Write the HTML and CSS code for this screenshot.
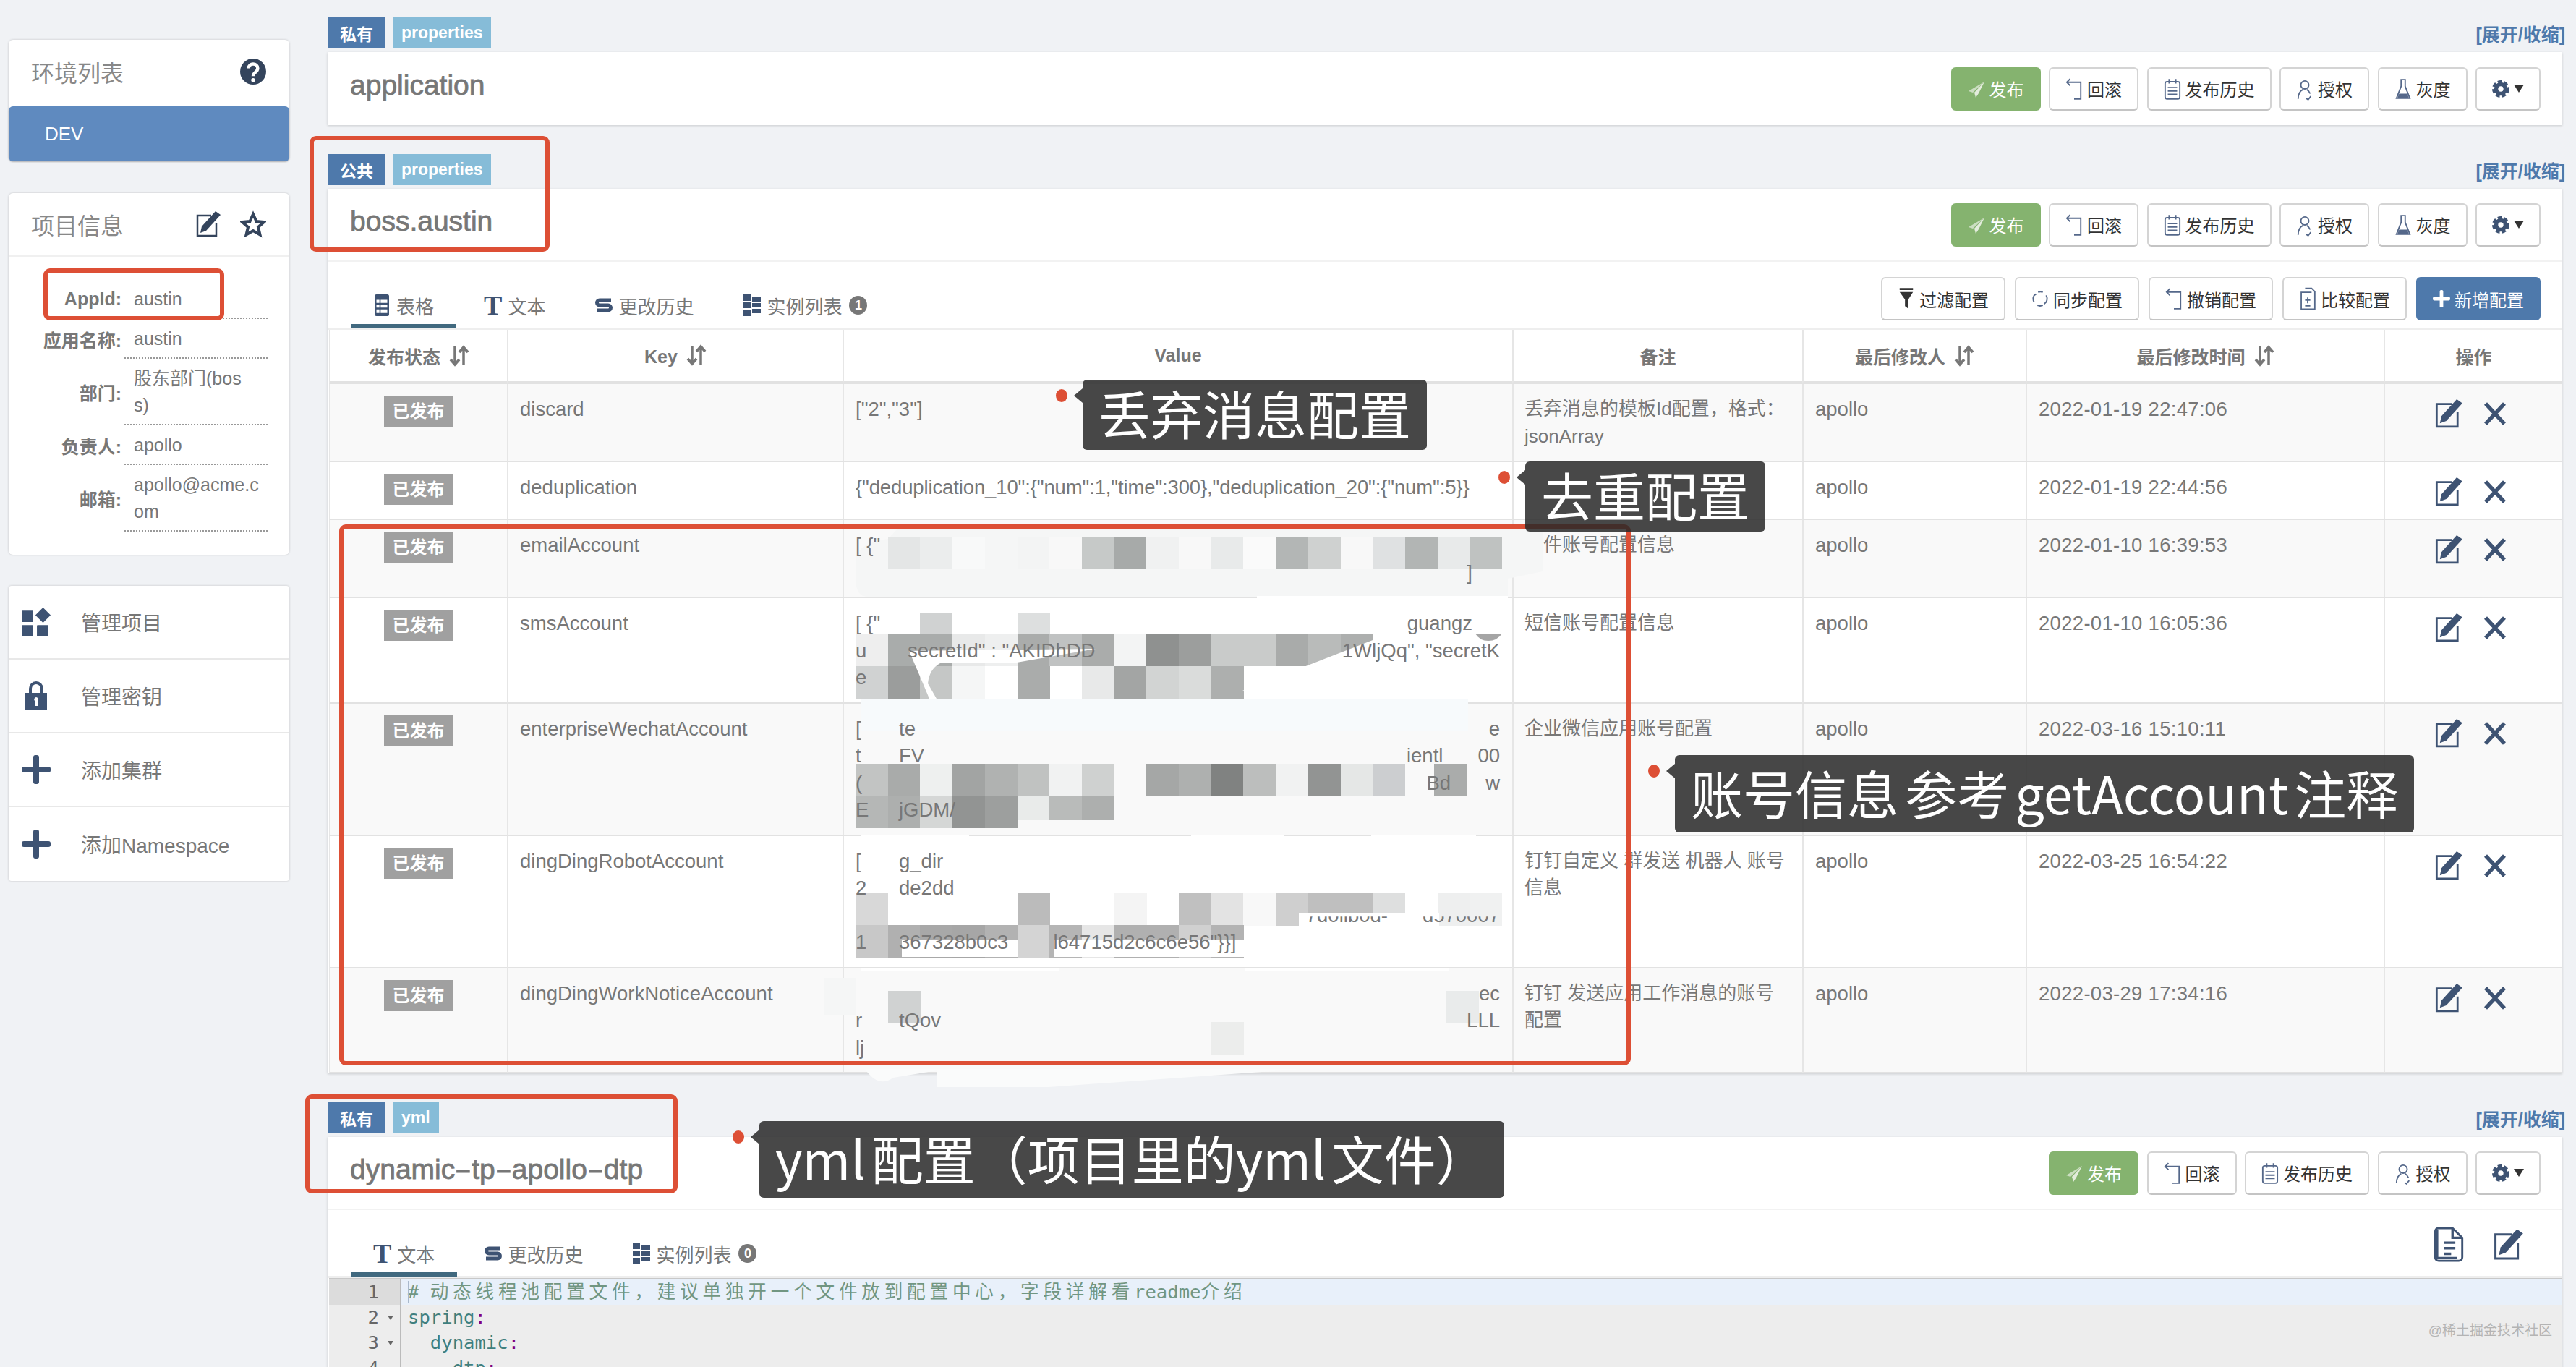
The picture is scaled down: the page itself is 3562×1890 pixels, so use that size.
FILE: index.html
```html
<!DOCTYPE html>
<html lang="zh-CN">
<head>
    <meta charset="UTF-8">
    <title>Apollo 配置中心</title>
    <link rel="stylesheet" href="styles.css">
</head>
<body>
<svg class="icon-defs" width="0" height="0">
    <symbol id="i-help" viewBox="0 0 40 40"><circle cx="20" cy="20" r="20" fill="currentColor"/><path d="M13 15c0-9 14-9 14 0 0 6-7 6-7 12" fill="none" stroke="#fff" stroke-width="5"/><circle cx="20" cy="33" r="3" fill="#fff"/></symbol>
    <symbol id="i-edit" viewBox="0 0 36 36"><path d="M22 6H3v28h26V16" fill="none" stroke="currentColor" stroke-width="2.500"/><path d="M28 0l7 5-20 22-8 3 2-9z" fill="currentColor"/></symbol>
    <symbol id="i-star" viewBox="0 0 36 34"><path d="M18 3l4.500 10 10.500 1-8 7 2.500 10.500-9.500-5.500-9.500 5.500 2.500-10.500-8-7 10.500-1z" fill="none" stroke="currentColor" stroke-width="4"/></symbol>
    <symbol id="i-apps" viewBox="0 0 38 38"><rect y="4" width="15" height="15" rx="1" fill="currentColor"/><rect y="23" width="15" height="15" rx="1" fill="currentColor"/><rect x="20" y="23" width="15" height="15" rx="1" fill="currentColor"/><path d="M28 0l10 10-10 10-10-10z" fill="currentColor"/></symbol>
    <symbol id="i-lock" viewBox="0 0 30 40"><path d="M7 18V10a8 8 0 0 1 16 0v8" fill="none" stroke="currentColor" stroke-width="4"/><path fill-rule="evenodd" d="M0 16h30v24H0zM15 22a3 3 0 0 0-2 5v7h4v-7a3 3 0 0 0-2-5z" fill="currentColor"/></symbol>
    <symbol id="i-plus" viewBox="0 0 40 40"><rect x="16" width="8" height="40" rx="3" fill="currentColor"/><rect y="16" width="40" height="8" rx="3" fill="currentColor"/></symbol>
    <symbol id="i-send" viewBox="0 0 24 24"><path d="M23 2L1 15l6 2z" fill="currentColor" opacity=".75"/><path d="M23 2L9 17l2 7 4-6z" fill="currentColor"/></symbol>
    <symbol id="i-back" viewBox="0 0 26 34"><path d="M7 2L2 7l5 5M2 7h21v25H13" fill="none" stroke="currentColor" stroke-width="2"/></symbol>
    <symbol id="i-note" viewBox="0 0 26 34"><rect x="2" y="6" width="22" height="26" rx="3" fill="none" stroke="currentColor" stroke-width="2"/><path d="M8 2v7M18 2v7M6 15h14M6 20h14M6 25h14" stroke="currentColor" stroke-width="2"/></symbol>
    <symbol id="i-user" viewBox="0 0 26 34"><circle cx="13" cy="11" r="6" fill="none" stroke="currentColor" stroke-width="2"/><path d="M3 32c0-8 3-12 7-14M16 18c2 1 4 3 5 6M15 31l3 2 4-5" fill="none" stroke="currentColor" stroke-width="2"/></symbol>
    <symbol id="i-flask" viewBox="0 0 26 34"><path d="M9 3h8M10 3v10L3 31h20l-7-18V3" fill="none" stroke="currentColor" stroke-width="2"/><path d="M7 24h12l3 7H4z" fill="currentColor"/></symbol>
    <symbol id="i-gear" viewBox="0 0 26 34"><circle cx="13" cy="17" r="7" fill="none" stroke="currentColor" stroke-width="6"/><circle cx="13" cy="17" r="11" fill="none" stroke="currentColor" stroke-width="4" stroke-dasharray="6 3.400"/></symbol>
    <symbol id="i-filter" viewBox="0 0 26 34"><path d="M3 1h20v3H3zM3 7h20l-7 11v14l-5-4V18z" fill="currentColor"/></symbol>
    <symbol id="i-sync" viewBox="0 0 26 34"><path d="M4 22a10 10 0 0 1 0-10l3-2M22 12a10 10 0 0 1 0 10l-3 3M10 7a11 11 0 0 1 7 0M17 27a11 11 0 0 1-8 0" fill="none" stroke="currentColor" stroke-width="2"/></symbol>
    <symbol id="i-diff" viewBox="0 0 26 38"><path d="M9 3h10l5 5v27H3V9h16" fill="none" stroke="currentColor" stroke-width="2"/><path d="M13 17v9M9 21h8M9 30h8" stroke="currentColor" stroke-width="2"/></symbol>
    <symbol id="i-table" viewBox="0 0 24 36"><path fill-rule="evenodd" d="M3 0h18a3 3 0 0 1 3 3v30a3 3 0 0 1-3 3H3a3 3 0 0 1-3-3V3a3 3 0 0 1 3-3zM3 9v5h5V9zM10 9v5h11V9zM3 17v5h5v-5zM10 17v5h11v-5zM3 25v6h5v-6zM10 25v6h11v-6z" fill="currentColor"/></symbol>
    <symbol id="i-hist" viewBox="0 0 24 30"><path d="M22 8H6a3 3 0 0 0 0 7h12a3 3 0 0 1 0 7H2" fill="none" stroke="currentColor" stroke-width="5"/></symbol>
    <symbol id="i-inst" viewBox="0 0 24 30"><path d="M0 0h10v9H0zM0 11h10v8H0zM0 21h10v9H0zM12 4h12v6H12zM12 12h12v6H12zM12 20h12v6H12z" fill="currentColor"/></symbol>
    <symbol id="i-sort" viewBox="0 0 28 30"><path d="M8 2v25M2 20l6 7 6-7M20 28V3M14 10l6-7 6 7" fill="none" stroke="currentColor" stroke-width="3.500"/></symbol>
    <symbol id="i-del" viewBox="0 0 34 34"><path d="M4 3l26 28M30 3L4 31" fill="none" stroke="currentColor" stroke-width="5.500"/></symbol>
    <symbol id="i-doc" viewBox="0 0 44 50"><path d="M6 4v40h28" fill="none" stroke="currentColor" stroke-width="3"/><path d="M3 6a5 5 0 0 1 5-5h20l14 14v28a5 5 0 0 1-5 5H8a5 5 0 0 1-5-5z" fill="none" stroke="currentColor" stroke-width="3"/><path d="M28 1v14h14M16 22h16M16 30h16M16 38h10" fill="none" stroke="currentColor" stroke-width="3.500"/></symbol>
</svg>

<div class="page">
    <aside class="sidebar">
        <section class="side-panel">
            <div class="side-head">
                <span>环境列表</span>
                <svg class="side-icon"><use href="#i-help"/></svg>
            </div>
            <div class="env-item">DEV</div>
        </section>

        <section class="side-panel side-gap">
            <div class="side-head side-head-line">
                <span>项目信息</span>
                <div class="side-tools">
                    <svg class="side-icon"><use href="#i-edit"/></svg>
                    <svg class="side-icon"><use href="#i-star"/></svg>
                </div>
            </div>
            <div class="info-list">
                <div class="info-row"><b>AppId:</b><span>austin</span></div>
                <div class="info-row"><b>应用名称:</b><span>austin</span></div>
                <div class="info-row"><b>部门:</b><span>股东部门(bos<br>s)</span></div>
                <div class="info-row"><b>负责人:</b><span>apollo</span></div>
                <div class="info-row"><b>邮箱:</b><span>apollo@acme.c<br>om</span></div>
            </div>
        </section>

        <section class="side-panel side-gap side-menu">
            <div class="menu-item"><svg class="menu-icon"><use href="#i-apps"/></svg>管理项目</div>
            <div class="menu-item"><svg class="menu-icon"><use href="#i-lock"/></svg>管理密钥</div>
            <div class="menu-item"><svg class="menu-icon"><use href="#i-plus"/></svg>添加集群</div>
            <div class="menu-item"><svg class="menu-icon"><use href="#i-plus"/></svg>添加Namespace</div>
        </section>
    </aside>

    <main class="content">
        <section class="ns">
            <div class="ns-bar">
                <div class="tags"><span class="tag tag-scope">私有</span><span class="tag tag-type">properties</span></div>
                <a class="ns-toggle">[展开/收缩]</a>
            </div>
            <div class="ns-panel">
                <div class="ns-head">
                    <h2>application</h2>
                    <div class="btns">
                        <button class="btn btn-green"><svg><use href="#i-send"/></svg>发布</button>
                        <button class="btn"><svg><use href="#i-back"/></svg>回滚</button>
                        <button class="btn"><svg><use href="#i-note"/></svg>发布历史</button>
                        <button class="btn"><svg><use href="#i-user"/></svg>授权</button>
                        <button class="btn"><svg><use href="#i-flask"/></svg>灰度</button>
                        <button class="btn btn-gear"><svg><use href="#i-gear"/></svg><i class="caret"></i></button>
                    </div>
                </div>
            </div>
        </section>

        <section class="ns">
            <div class="ns-bar">
                <div class="tags"><span class="tag tag-scope">公共</span><span class="tag tag-type">properties</span></div>
                <a class="ns-toggle">[展开/收缩]</a>
            </div>
            <div class="ns-panel">
                <div class="ns-head ns-head-line">
                    <h2>boss.austin</h2>
                    <div class="btns">
                        <button class="btn btn-green"><svg><use href="#i-send"/></svg>发布</button>
                        <button class="btn"><svg><use href="#i-back"/></svg>回滚</button>
                        <button class="btn"><svg><use href="#i-note"/></svg>发布历史</button>
                        <button class="btn"><svg><use href="#i-user"/></svg>授权</button>
                        <button class="btn"><svg><use href="#i-flask"/></svg>灰度</button>
                        <button class="btn btn-gear"><svg><use href="#i-gear"/></svg><i class="caret"></i></button>
                    </div>
                </div>
                <div class="tab-row">
                    <div class="tabs">
                        <div class="tab tab-on"><svg><use href="#i-table"/></svg>表格</div>
                        <div class="tab"><span class="tab-t">T</span>文本</div>
                        <div class="tab"><svg><use href="#i-hist"/></svg>更改历史</div>
                        <div class="tab"><svg><use href="#i-inst"/></svg>实例列表<span class="count">1</span></div>
                    </div>
                    <div class="btns btns-wide">
                        <button class="btn btn-dark"><svg><use href="#i-filter"/></svg>过滤配置</button>
                        <button class="btn"><svg><use href="#i-sync"/></svg>同步配置</button>
                        <button class="btn"><svg><use href="#i-back"/></svg>撤销配置</button>
                        <button class="btn"><svg><use href="#i-diff"/></svg>比较配置</button>
                        <button class="btn btn-blue"><svg><use href="#i-plus"/></svg>新增配置</button>
                    </div>
                </div>
                <table class="items">
                    <colgroup>
                        <col class="c-status"><col class="c-key"><col class="c-value"><col class="c-note"><col class="c-user"><col class="c-time"><col class="c-ops">
                    </colgroup>
                    <thead>
                        <tr>
                            <th>发布状态<svg class="sort"><use href="#i-sort"/></svg></th>
                            <th>Key<svg class="sort"><use href="#i-sort"/></svg></th>
                            <th>Value</th>
                            <th>备注</th>
                            <th>最后修改人<svg class="sort"><use href="#i-sort"/></svg></th>
                            <th>最后修改时间<svg class="sort"><use href="#i-sort"/></svg></th>
                            <th>操作</th>
                        </tr>
                    </thead>
                    <tbody>
                        <tr>
                            <td class="status"><span class="badge">已发布</span></td>
                            <td>discard</td>
                            <td>["2","3"]</td>
                            <td class="remark">丢弃消息的模板Id配置，格式：<br>jsonArray</td>
                            <td>apollo</td>
                            <td class="when">2022-01-19 22:47:06</td>
                            <td class="ops"><svg class="op"><use href="#i-edit"/></svg><svg class="op op-del"><use href="#i-del"/></svg></td>
                        </tr>
                        <tr>
                            <td class="status"><span class="badge">已发布</span></td>
                            <td>deduplication</td>
                            <td class="v-json">{"deduplication_10":{"num":1,"time":300},"deduplication_20":{"num":5}}</td>
                            <td class="remark"></td>
                            <td>apollo</td>
                            <td class="when">2022-01-19 22:44:56</td>
                            <td class="ops"><svg class="op"><use href="#i-edit"/></svg><svg class="op op-del"><use href="#i-del"/></svg></td>
                        </tr>
                        <tr>
                            <td class="status"><span class="badge">已发布</span></td>
                            <td>emailAccount</td>
                            <td>
                                <div class="v-line"><span>[ {"</span></div>
                                <div class="v-line"><span class="v-end v-near">]</span></div>
                            </td>
                            <td class="remark">邮件账号配置信息</td>
                            <td>apollo</td>
                            <td class="when">2022-01-10 16:39:53</td>
                            <td class="ops"><svg class="op"><use href="#i-edit"/></svg><svg class="op op-del"><use href="#i-del"/></svg></td>
                        </tr>
                        <tr>
                            <td class="status"><span class="badge">已发布</span></td>
                            <td>smsAccount</td>
                            <td>
                                <div class="v-line"><span>[ {"</span><span class="v-end v-near">guangz</span></div>
                                <div class="v-line"><span class="v-lead">u</span><span class="v-shift">secretId" : "AKIDhDD</span><span class="v-end">1WljQq", "secretK</span></div>
                                <div class="v-line"><span>e</span></div>
                            </td>
                            <td class="remark">短信账号配置信息</td>
                            <td>apollo</td>
                            <td class="when">2022-01-10 16:05:36</td>
                            <td class="ops"><svg class="op"><use href="#i-edit"/></svg><svg class="op op-del"><use href="#i-del"/></svg></td>
                        </tr>
                        <tr>
                            <td class="status"><span class="badge">已发布</span></td>
                            <td>enterpriseWechatAccount</td>
                            <td>
                                <div class="v-line"><span class="v-lead">[</span><span>te</span><span class="v-end">e</span></div>
                                <div class="v-line"><span class="v-lead">t</span><span>FV</span><span class="v-end">ientl</span><span class="v-tail">00</span></div>
                                <div class="v-line"><span class="v-lead">(</span><span class="v-end">Bd</span><span class="v-tail">w</span></div>
                                <div class="v-line"><span class="v-lead">E</span><span>jGDM/</span></div>
                            </td>
                            <td class="remark">企业微信应用账号配置</td>
                            <td>apollo</td>
                            <td class="when">2022-03-16 15:10:11</td>
                            <td class="ops"><svg class="op"><use href="#i-edit"/></svg><svg class="op op-del"><use href="#i-del"/></svg></td>
                        </tr>
                        <tr>
                            <td class="status"><span class="badge">已发布</span></td>
                            <td>dingDingRobotAccount</td>
                            <td>
                                <div class="v-line"><span class="v-lead">[</span><span>g_dir</span></div>
                                <div class="v-line"><span class="v-lead">2</span><span>de2dd</span></div>
                                <div class="v-line v-clip"><span class="v-end">7d0llb0d-</span><span class="v-tail">d570007</span></div>
                                <div class="v-line"><span class="v-lead">1</span><span>367328b0c3</span><span class="v-gap">l64715d2c6c6e56"}}]</span></div>
                            </td>
                            <td class="remark">钉钉自定义 群发送 机器人 账号<br>信息</td>
                            <td>apollo</td>
                            <td class="when">2022-03-25 16:54:22</td>
                            <td class="ops"><svg class="op"><use href="#i-edit"/></svg><svg class="op op-del"><use href="#i-del"/></svg></td>
                        </tr>
                        <tr>
                            <td class="status"><span class="badge">已发布</span></td>
                            <td>dingDingWorkNoticeAccount</td>
                            <td>
                                <div class="v-line"><span class="v-end">ec</span></div>
                                <div class="v-line"><span class="v-lead">r</span><span>tQov</span><span class="v-end">LLL</span></div>
                                <div class="v-line"><span>lj</span></div>
                            </td>
                            <td class="remark">钉钉 发送应用工作消息的账号<br>配置</td>
                            <td>apollo</td>
                            <td class="when">2022-03-29 17:34:16</td>
                            <td class="ops"><svg class="op"><use href="#i-edit"/></svg><svg class="op op-del"><use href="#i-del"/></svg></td>
                        </tr>
                    </tbody>
                </table>
            </div>
        </section>

        <section class="ns">
            <div class="ns-bar">
                <div class="tags"><span class="tag tag-scope">私有</span><span class="tag tag-type">yml</span></div>
                <a class="ns-toggle">[展开/收缩]</a>
            </div>
            <div class="ns-panel">
                <div class="ns-head ns-head-line">
                    <h2>dynamic<span class="dash">-</span>tp<span class="dash">-</span>apollo<span class="dash">-</span>dtp</h2>
                    <div class="btns">
                        <button class="btn btn-green"><svg><use href="#i-send"/></svg>发布</button>
                        <button class="btn"><svg><use href="#i-back"/></svg>回滚</button>
                        <button class="btn"><svg><use href="#i-note"/></svg>发布历史</button>
                        <button class="btn"><svg><use href="#i-user"/></svg>授权</button>
                        <button class="btn btn-gear"><svg><use href="#i-gear"/></svg><i class="caret"></i></button>
                    </div>
                </div>
                <div class="tab-row">
                    <div class="tabs">
                        <div class="tab tab-on"><span class="tab-t">T</span>文本</div>
                        <div class="tab"><svg><use href="#i-hist"/></svg>更改历史</div>
                        <div class="tab"><svg><use href="#i-inst"/></svg>实例列表<span class="count">0</span></div>
                    </div>
                    <div class="doc-tools">
                        <svg class="doc-icon"><use href="#i-doc"/></svg>
                        <svg class="doc-icon"><use href="#i-edit"/></svg>
                    </div>
                </div>
                <div class="editor">
                    <div class="ed-line ed-active">
                        <div class="ed-gutter">1</div>
                        <div class="ed-code ed-comment"># <span class="ed-cjk">动态线程池配置文件，建议单独开一个文件放到配置中心，字段详解看</span>readme<span class="ed-cjk">介绍</span></div>
                    </div>
                    <div class="ed-line">
                        <div class="ed-gutter">2<i class="fold"></i></div>
                        <div class="ed-code"><span class="ed-key">spring</span><span class="ed-colon">:</span></div>
                    </div>
                    <div class="ed-line">
                        <div class="ed-gutter">3<i class="fold"></i></div>
                        <div class="ed-code">  <span class="ed-key">dynamic</span><span class="ed-colon">:</span></div>
                    </div>
                    <div class="ed-line">
                        <div class="ed-gutter">4</div>
                        <div class="ed-code">    <span class="ed-key">dtp</span><span class="ed-colon">:</span></div>
                    </div>
                    <span class="watermark">@稀土掘金技术社区</span>
                </div>
            </div>
        </section>
    </main>

    <!-- mosaic and brush strokes over the value column -->
    <svg class="redact" viewBox="1100 720 1060 800">
        <path d="M1240 732H2133V790L2085 800V825H1200Q1183 825 1183 800V770Q1190 750 1228 745Z" fill="#f5f6f6"/>
        <rect x="1738" y="824" width="347" height="7" fill="#fff"/>
        <rect x="1190" y="970" width="656" height="6" fill="#fff"/>
        <rect x="1190" y="966" width="840" height="45" fill="#f7fafc"/>
        <rect x="1190" y="1155" width="150" height="5" fill="#fff"/>
        <rect x="1647" y="1155" width="129" height="5" fill="#fff"/>
        <rect x="1896" y="1155" width="145" height="5" fill="#fff"/>
        <rect x="1190" y="1338" width="275" height="5" fill="#fff"/>
        <rect x="1722" y="1338" width="282" height="5" fill="#fff"/>
        <rect x="1140" y="1352" width="43" height="52" fill="#f5f6f6"/>
        <path d="M1196 1478Q1215 1505 1235 1490L1296 1480V1503H1450L1800 1478Z" fill="#fafbfb"/>

        <g class="mosaic">
            <rect x="1228" y="742" fill="#e4e6e6"/><rect x="1272" y="742" fill="#ebeded"/><rect x="1317" y="742" fill="#f8f9f9"/><rect x="1362" y="742" fill="#f5f6f6"/><rect x="1407" y="742" fill="#f3f4f4"/><rect x="1451" y="742" fill="#f8f8f8"/><rect x="1496" y="742" fill="#c6c9c8"/><rect x="1541" y="742" fill="#a7aaa9"/><rect x="1585" y="742" fill="#f0f1f1"/><rect x="1630" y="742" fill="#f8f8f8"/><rect x="1675" y="742" fill="#e8eaea"/><rect x="1719" y="742" fill="#fafafa"/><rect x="1764" y="742" fill="#b3b6b5"/><rect x="1809" y="742" fill="#cfd1d0"/><rect x="1854" y="742" fill="#f8f8f8"/><rect x="1898" y="742" fill="#dfe1e2"/><rect x="1943" y="742" fill="#b2b5b4"/><rect x="1988" y="742" fill="#e8eaea"/><rect x="2032" y="742" fill="#bfc2c1"/>

            <rect x="1272" y="847" fill="#d0d2d2"/><rect x="1407" y="847" fill="#dddfdf"/>

            <rect x="1183" y="876" fill="#eeeeee"/><rect x="1228" y="876" fill="#a9acab"/><rect x="1272" y="876" fill="#a9acab"/><rect x="1317" y="876" fill="#e8e9e9"/><rect x="1362" y="876" fill="#eeefef"/><rect x="1407" y="876" fill="#aaacab"/><rect x="1451" y="876" fill="#c0c2c2"/><rect x="1496" y="876" fill="#aaacab"/><rect x="1541" y="876" fill="#f3f4f4"/><rect x="1585" y="876" fill="#8f9190"/><rect x="1630" y="876" fill="#9c9e9d"/><rect x="1675" y="876" fill="#c9cbca"/><rect x="1719" y="876" fill="#c9cbca"/><rect x="1764" y="876" fill="#a9abaa"/><rect x="1809" y="876" fill="#b9bbba"/><rect x="1854" y="876" fill="#adafae"/>

            <rect x="1183" y="921" fill="#d0d2d2"/><rect x="1228" y="921" fill="#9b9d9c"/><rect x="1272" y="921" fill="#c5c7c6"/><rect x="1317" y="921" fill="#f5f6f6"/><rect x="1407" y="921" fill="#aaacab"/><rect x="1496" y="921" fill="#e8e9e9"/><rect x="1541" y="921" fill="#a3a5a4"/><rect x="1585" y="921" fill="#d2d4d3"/><rect x="1630" y="921" fill="#dadcdb"/><rect x="1675" y="921" fill="#adafae"/>

            <rect x="1183" y="1056" fill="#c2c4c3"/><rect x="1228" y="1056" fill="#a9abaa"/><rect x="1272" y="1056" fill="#eef0ef"/><rect x="1317" y="1056" fill="#a2a4a3"/><rect x="1362" y="1056" fill="#b0b2b1"/><rect x="1407" y="1056" fill="#c0c2c1"/><rect x="1451" y="1056" fill="#f1f2f2"/><rect x="1496" y="1056" fill="#cfd1d0"/><rect x="1585" y="1056" fill="#a5a7a6"/><rect x="1630" y="1056" fill="#aeb0af"/><rect x="1675" y="1056" fill="#808281"/><rect x="1719" y="1056" fill="#bcbebd"/><rect x="1764" y="1056" fill="#f1f2f2"/><rect x="1809" y="1056" fill="#929493"/><rect x="1854" y="1056" fill="#e5e7e6"/><rect x="1898" y="1056" fill="#ccced0"/><rect x="1983" y="1056" fill="#aaacab"/>

            <rect x="1183" y="1100" fill="#b5b7b6"/><rect x="1228" y="1100" fill="#adafae"/><rect x="1272" y="1100" fill="#d5d7d6"/><rect x="1317" y="1100" fill="#929493"/><rect x="1362" y="1100" fill="#9d9f9e"/><rect x="1407" y="1100" fill="#e9ebea"/><rect x="1451" y="1100" fill="#b9bbba"/><rect x="1496" y="1100" fill="#adafae"/>

            <rect x="1183" y="1235" fill="#d8d8d8"/><rect x="1407" y="1235" fill="#bbbbbb"/><rect x="1541" y="1235" fill="#f4f4f4"/><rect x="1630" y="1235" fill="#c0c0c0"/><rect x="1675" y="1235" fill="#e3e3e3"/><rect x="1719" y="1235" fill="#f8f8f8"/><rect x="1764" y="1235" fill="#cfcfcf"/><rect x="1809" y="1235" fill="#bfbfbf"/><rect x="1854" y="1235" fill="#bfbfbf"/><rect x="1898" y="1235" fill="#dedfdf"/><rect x="1988" y="1235" fill="#eeefef"/><rect x="2032" y="1235" fill="#f0f1f1"/>

            <rect x="1183" y="1279" fill="#c8c8c8"/><rect x="1228" y="1279" fill="#b0b0b0"/><rect x="1272" y="1279" fill="#a8a8a8"/><rect x="1317" y="1279" fill="#a6a6a6"/><rect x="1362" y="1279" fill="#b2b2b2"/><rect x="1407" y="1279" fill="#d4d4d4"/><rect x="1451" y="1279" fill="#b5b5b5"/><rect x="1496" y="1279" fill="#e6e6e6"/><rect x="1541" y="1279" fill="#b0b0b0"/><rect x="1585" y="1279" fill="#b0b0b0"/><rect x="1630" y="1279" fill="#d0d0d0"/><rect x="1675" y="1279" fill="#b3b3b3"/>

            <rect x="1228" y="1370" fill="#d0d2d2"/><rect x="2000" y="1370" fill="#e9ebeb"/>
            <rect x="1675" y="1413" fill="#ecedec"/>
        </g>

        <path d="M1929 873H2085V966H1775L1718 955Z" fill="#fff"/>
        <path d="M1257 900L1515 897 1400 917H1300Q1285 925 1283 945L1295 966H1285Q1270 930 1257 900Z" fill="#fff"/>
        <path d="M1247 1300H1407V1323H1247ZM1458 1300H1800V1323H1458Z" fill="#fff"/>
        <rect x="1796" y="1262" width="194" height="18" fill="#fff"/>
        <rect x="1407" y="1134" width="134" height="11" fill="#f9f9f9"/>
        <path d="M2040 876H2077Q2070 886 2058 886Q2046 886 2040 876Z" fill="#a5a5a5"/>
    </svg>

    <div class="frame frame-ns"></div>
    <div class="frame frame-app"></div>
    <div class="frame frame-rows"></div>
    <div class="frame frame-yml"></div>

    <div class="note note-discard">丢弃消息配置</div>
    <div class="note note-dedup">去重配置</div>
    <div class="note note-account">账号信息 参考 getAccount 注释</div>
    <div class="note note-yml">yml 配置（项目里的yml 文件）</div>
</div>
</body>
</html>
```

FILE: styles.css
```css
* {
    box-sizing: border-box;
}

html, body {
    margin: 0;
    padding: 0;
}

body {
    background: #f0f2f5;
    color: #777;
    font-family: "Liberation Sans", "Noto Sans CJK SC", sans-serif;
    font-size: 27.5px;
}

.icon-defs {
    position: absolute;
}

.page {
    position: relative;
    display: flex;
    width: 3562px;
    height: 1890px;
    overflow: hidden;
}

/* left column */
.sidebar {
    flex: none;
    width: 388px;
    margin-left: 12px;
    padding-top: 55px;
}

.side-panel {
    background: #fff;
    border-radius: 6px;
    box-shadow: 0 0 3px rgba(0,0,0,.2);
}

.side-gap {
    margin-top: 44px;
}

.side-head {
    display: flex;
    align-items: center;
    justify-content: space-between;
    height: 88px;
    padding: 0 32px 0 31px;
    color: #888;
    font-size: 32px;
}

.side-head-line {
    border-bottom: 2px solid #f0f0f0;
}

.side-tools {
    display: flex;
    gap: 26px;
}

.side-icon {
    display: block;
    width: 36px;
    height: 38px;
    color: #34445c;
}

.env-item {
    display: flex;
    align-items: center;
    height: 76px;
    margin-top: 4px;
    padding-left: 50px;
    background: #5f8abf;
    border-radius: 6px;
    box-shadow: 0 1px 2px rgba(0,0,0,.2);
    color: #fff;
    font-size: 26px;
}

.info-list {
    padding: 31px 30px 32px 0;
    font-size: 25px;
}

.info-row {
    display: grid;
    grid-template-columns: 156px 1fr;
    column-gap: 4px;
    align-items: center;
}

.info-row b {
    text-align: right;
}

.info-row span {
    padding: 9px 0 7px 13px;
    border-bottom: 2px dotted #999;
    line-height: 37px;
    white-space: nowrap;
}

.side-menu {
    border-radius: 4px;
    margin-top: 43px;
}

.menu-item {
    display: flex;
    align-items: center;
    height: 102px;
    color: #777;
    font-size: 28px;
    border-bottom: 2px solid #e8e8e8;
}

.menu-item:last-child {
    border-bottom: none;
}

.menu-icon {
    flex: none;
    width: 40px;
    height: 40px;
    margin: 0 42px 0 18px;
    color: #3e5373;
}

/* namespaces */
.content {
    flex: none;
    width: 3090px;
    margin-left: 53px;
    padding-top: 24px;
}

.ns {
    margin-bottom: 40px;
}

.ns-bar {
    display: flex;
    align-items: center;
    justify-content: space-between;
    height: 43px;
    margin-bottom: 5px;
}

.tags {
    display: flex;
    gap: 10px;
    height: 43px;
}

.tag {
    display: flex;
    align-items: center;
    color: #fff;
    font-size: 23px;
    font-weight: bold;
}

.tag-scope {
    padding: 0 17px;
    background: #4e79ab;
}

.tag-type {
    padding: 0 12px;
    background: #86bcd8;
}

.ns-toggle {
    margin-right: -4px;
    color: #4e79ab;
    font-size: 25px;
    font-weight: bold;
}

.ns-panel {
    background: #fff;
    box-shadow: 0 1px 3px rgba(0,0,0,.16);
}

.ns-head {
    display: flex;
    align-items: center;
    justify-content: space-between;
    height: 101px;
    padding: 0 30px 0 31px;
}

.ns-head-line {
    border-bottom: 2px solid #f2f2f2;
}

.ns-head h2 {
    margin: 0 0 10px;
    color: #777;
    font-size: 39px;
    font-weight: normal;
    -webkit-text-stroke: .8px #777;
}

.dash {
    display: inline-block;
    width: 23px;
    text-align: center;
    transform: scaleX(1.8);
}

.btns {
    display: flex;
    gap: 11.500px;
}

.btns-wide {
    gap: 13px;
}

.btn {
    display: flex;
    align-items: center;
    gap: 6px;
    height: 60px;
    padding: 0 21px;
    background: #fff;
    border: 2px solid #d4d4d4;
    border-bottom-color: #c4c4c4;
    border-radius: 6px;
    color: #333;
    font-family: inherit;
    font-size: 24px;
}

.btn svg {
    width: 24px;
    height: 34px;
    color: #55688a;
}

.btn-green {
    background: #85b36f;
    border-color: #85b36f;
    color: #fff;
}

.btn-green svg {
    color: #e3ecdc;
}

.btn-blue {
    background: #4e79ab;
    border-color: #4e79ab;
    color: #fff;
}

.btn-blue svg {
    color: #fff;
}

.btn-dark svg {
    color: #333;
}

.btn-gear svg {
    color: #3e5373;
}

.caret {
    width: 0;
    height: 0;
    border-left: 7px solid transparent;
    border-right: 7px solid transparent;
    border-top: 11px solid #333;
}

.tab-row {
    display: flex;
    align-items: flex-start;
    justify-content: space-between;
    height: 94px;
    padding: 21px 30px 0 32px;
    border-bottom: 3px solid #eee;
}

.tabs {
    display: flex;
    align-self: flex-end;
    gap: 7px;
    margin-bottom: -1px;
}

.tab {
    display: flex;
    align-items: center;
    gap: 8px;
    height: 58px;
    padding: 0 31px 6px;
    color: #777;
    font-size: 26px;
}

.tab svg {
    width: 24px;
    height: 30px;
    color: #3e5373;
}

.tab-on {
    border-bottom: 6px solid #41697f;
    padding-bottom: 0;
}

.tab-t {
    color: #3e5373;
    font-family: "Liberation Serif", serif;
    font-size: 38px;
    font-weight: bold;
    line-height: 1;
}

.count {
    display: flex;
    align-items: center;
    justify-content: center;
    width: 25px;
    height: 26px;
    margin-left: 2px;
    background: #777;
    border-radius: 50%;
    color: #fff;
    font-size: 18px;
    font-weight: bold;
}

.doc-tools {
    display: flex;
    gap: 40px;
    margin: 3px 23px 0 0;
}

.doc-icon {
    width: 43px;
    height: 48px;
    color: #3e5373;
}

/* config table */
.items {
    width: 3088px;
    margin-left: 2px;
    border-collapse: separate;
    border-spacing: 0;
    table-layout: fixed;
}

.c-status { width: 246px; }
.c-key { width: 464px; }
.c-value { width: 926px; }
.c-note { width: 401px; }
.c-user { width: 309px; }
.c-time { width: 495px; }
.c-ops { width: 247px; }

.items th {
    height: 75px;
    border-left: 2px solid #e6e6e6;
    border-bottom: 4px solid #e2e2e2;
    color: #777;
    font-size: 25px;
    font-weight: bold;
    text-align: center;
}

.items td {
    height: 80px;
    padding: 16px 17px 15px 16px;
    border-left: 2px solid #e6e6e6;
    border-bottom: 2px solid #e2e2e2;
    line-height: 37.5px;
    vertical-align: top;
}

.items tbody tr:nth-child(odd) td {
    background: #f9f9f9;
}

.sort {
    width: 28px;
    height: 30px;
    margin-left: 12px;
    vertical-align: -4px;
    color: #777;
}

.items .status {
    text-align: center;
}

.badge {
    display: inline-block;
    width: 96px;
    height: 43px;
    background: #a0a0a0;
    color: #fff;
    font-size: 24px;
    font-weight: bold;
    line-height: 43px;
    vertical-align: top;
}

.items .remark {
    padding-left: 15px;
    font-size: 26px;
}

.when {
    letter-spacing: .3px;
}

.ops {
    white-space: nowrap;
}

.op {
    width: 40px;
    height: 40px;
    margin: 5px 0 0 52px;
    vertical-align: top;
    color: #3e5373;
}

.op-del {
    width: 34px;
    height: 34px;
    margin: 8px 0 0 27px;
}

/* value fragments that stay readable through the brush strokes */
.v-line {
    display: flex;
    height: 37.5px;
    white-space: nowrap;
}

.v-line span {
    position: relative;
    z-index: 2;
}

.v-json {
    letter-spacing: -.13px;
}

.v-lead {
    width: 60px;
}

.v-shift {
    margin-left: 12px;
}

.v-end {
    margin-left: auto;
}

.v-near {
    margin-right: 38px;
}

.v-tail {
    margin-left: 48px;
}

.v-gap {
    margin-left: 62px;
}

.v-clip span {
    clip-path: inset(55% 0 0 0);
}

/* editor */
.editor {
    position: relative;
    margin-left: 2px;
    background: #ededed;
    border-top: 2px solid #c8c8c8;
    font-family: "DejaVu Sans Mono", "Noto Sans CJK SC", monospace;
    font-size: 25.6px;
}

.ed-line {
    display: flex;
    height: 35px;
    line-height: 35px;
}

.ed-gutter {
    position: relative;
    flex: none;
    width: 99px;
    padding-right: 29px;
    border-right: 1px solid #bbb;
    color: #666;
    text-align: right;
}

.fold {
    position: absolute;
    right: 9px;
    top: 15px;
    border-left: 4px solid transparent;
    border-right: 4px solid transparent;
    border-top: 6px solid #666;
}

.ed-code {
    flex: 1;
    padding-left: 10px;
    white-space: pre;
}

.ed-active {
    background: #e8f0fa;
}

.ed-active .ed-gutter {
    background: #dcdcdc;
}

.ed-active .ed-code {
    position: relative;
}

.ed-active .ed-code::before {
    content: "";
    position: absolute;
    left: 10px;
    top: 2px;
    bottom: 2px;
    border-left: 2px solid #a9b9cc;
}

.ed-comment {
    color: #719682;
}

.ed-cjk {
    letter-spacing: 5.8px;
}

.ed-key {
    color: #3f7f7f;
}

.ed-colon {
    color: #7f007f;
}

.watermark {
    position: absolute;
    right: 14px;
    top: 55px;
    color: #b4b4b4;
    font-family: "Liberation Sans", "Noto Sans CJK SC", sans-serif;
    font-size: 19px;
}

/* annotations drawn on top of the screenshot */
.mosaic rect {
    width: 45px;
    height: 45px;
}

.redact {
    position: absolute;
    left: 1100px;
    top: 720px;
    width: 1060px;
    height: 800px;
    z-index: 1;
}

.frame {
    position: absolute;
    z-index: 2;
    border: 6px solid #dd4f35;
    border-radius: 9px;
}

.frame-ns { left: 428px; top: 188px; width: 332px; height: 160px; }
.frame-app { left: 60px; top: 371px; width: 250px; height: 72px; }
.frame-rows { left: 469px; top: 725px; width: 1786px; height: 748px; }
.frame-yml { left: 422px; top: 1513px; width: 515px; height: 137px; }

.note {
    position: absolute;
    z-index: 3;
    height: 97px;
    padding: 0 22px;
    background: rgba(40,40,40,.85);
    border-radius: 6px;
    color: #fff;
    font-family: "Noto Sans CJK SC", "Liberation Sans", sans-serif;
    font-size: 72px;
    line-height: 90px;
    word-spacing: -8px;
    white-space: nowrap;
}

.note::before {
    content: "";
    position: absolute;
    left: -12px;
    top: 12px;
    border-top: 10px solid transparent;
    border-bottom: 10px solid transparent;
    border-right: 12px solid rgba(40,40,40,.85);
}

.note::after {
    content: "";
    position: absolute;
    left: -37px;
    top: 13px;
    width: 16px;
    height: 18px;
    background: #dd4f35;
    border-radius: 50%;
}

.note-discard { left: 1497px; top: 525px; }
.note-dedup { left: 2109px; top: 638px; }
.note-account { left: 2316px; top: 1044px; height: 107px; line-height: 102px; }
.note-yml { left: 1050px; top: 1550px; height: 106px; line-height: 100px; }
```
